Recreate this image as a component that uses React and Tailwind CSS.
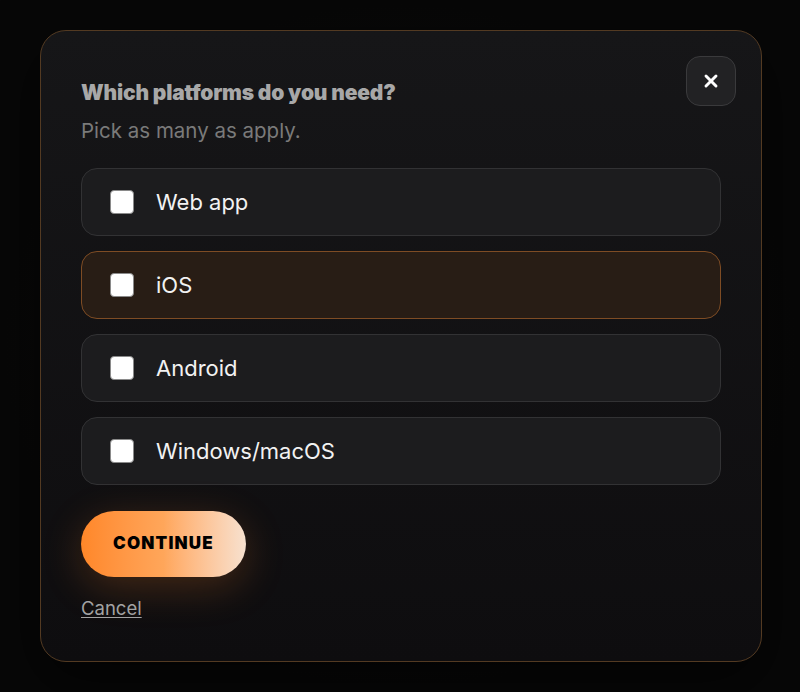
import { X } from 'lucide-react';

const OPTIONS = [
  { label: 'Web app', active: false },
  { label: 'iOS', active: true },
  { label: 'Android', active: false },
  { label: 'Windows/macOS', active: false },
];

/* ── Option row ─────────────────────────────────────────── */
function Option({ label, active }) {
  return (
    <label
      className={`flex items-center h-[68px] pl-[28px] rounded-2xl border cursor-pointer ${
        active
          ? 'bg-[#281d15] border-[#7e4c24]'
          : 'bg-[#1c1c1e] border-[#323234]'
      }`}
    >
      <span className="w-6 h-6 rounded-[4px] bg-white border border-[#8a8a8a] shrink-0" />
      <span className="ml-[22px] text-[22px] text-[#f2f2f2]">{label}</span>
    </label>
  );
}

export default function App() {
  return (
    <div
      className="min-h-screen flex items-center justify-center bg-[#070707] bg-[radial-gradient(ellipse_at_center,#120f0c_0%,#070707_70%)]"
      style={{ fontFamily: 'Inter, "Noto Sans", sans-serif' }}
    >
      <div className="relative w-[722px] ml-[2px] rounded-[26px] border border-[#533a22] bg-gradient-to-b from-[#161618] to-[#0e0d0f] px-10 pt-12 pb-10 shadow-[0_20px_60px_rgba(0,0,0,0.6)]">
        <button className="absolute top-[25px] right-[25px] w-[50px] h-[50px] rounded-[14px] bg-[#222224] border border-[#3a3a3c] flex items-center justify-center text-white">
          <X size={20} strokeWidth={3.5} />
        </button>

        <h2 className="text-[21px] leading-7 font-black text-[#a8a8a8] tracking-[-0.2px]">
          Which platforms do you need?
        </h2>
        <p className="mt-2.5 text-[20.5px] leading-7 text-[#7a7a7a]">Pick as many as apply.</p>

        <div className="mt-[23px] flex flex-col gap-[15px]">
          {OPTIONS.map(o => (
            <Option key={o.label} {...o} />
          ))}
        </div>

        <button className="mt-[26px] h-[66px] w-[165px] rounded-full bg-gradient-to-r from-[#ff8728] via-[#ffa65a] to-[#f7e1cf] text-black text-[17px] font-black tracking-[0.07em] shadow-[0_10px_40px_rgba(255,130,40,0.22)]">
          CONTINUE
        </button>

        <div className="mt-[19px]">
          <a href="#" className="text-[18.5px] leading-6 text-[#a3a3a3] underline underline-offset-2">
            Cancel
          </a>
        </div>
      </div>
    </div>
  );
}
